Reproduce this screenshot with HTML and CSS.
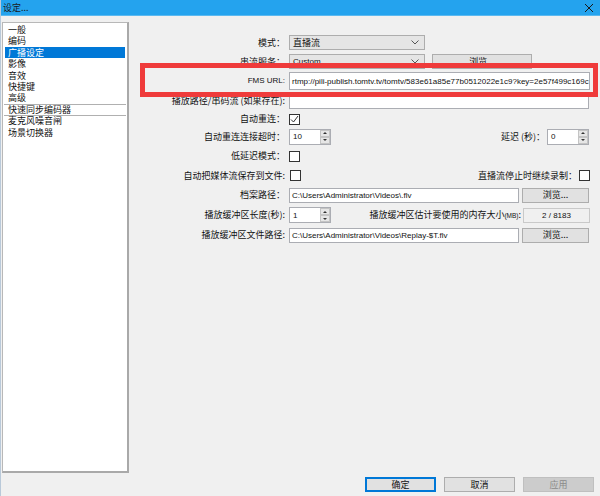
FILE: index.html
```html
<!DOCTYPE html>
<html lang="zh-CN">
<head>
<meta charset="utf-8">
<title>设定...</title>
<link rel="stylesheet" href="styles.css">
</head>
<body>
<div class="window">
  <div class="titlebar">
    <span class="title">设定...</span>
    <svg class="close" width="10" height="10" viewBox="0 0 10 10"><path d="M1 1 L9 9 M9 1 L1 9" stroke="#1a1a1a" stroke-width="1" fill="none"/></svg>
  </div>
  <div class="main">
    <ul class="sidebar">
      <li>一般</li>
      <li>编码</li>
      <li class="selected">广播设定</li>
      <li>影像</li>
      <li>音效</li>
      <li>快捷键</li>
      <li>高级</li>
      <li class="sep">快速同步编码器</li>
      <li class="sep">麦克风噪音闸</li>
      <li>场景切换器</li>
    </ul>
    <div class="panel">
      <div class="form">
        <div class="lbl">模式：</div>
        <div class="fld">
          <div class="combo w136"><span>直播流</span><svg width="8" height="5" viewBox="0 0 8 5"><path d="M0.5 0.5 L4 4 L7.5 0.5" stroke="#555" fill="none"/></svg></div>
        </div>

        <div class="lbl">串流服务：</div>
        <div class="fld">
          <div class="combo w136"><span class="latin">Custom</span><svg width="8" height="5" viewBox="0 0 8 5"><path d="M0.5 0.5 L4 4 L7.5 0.5" stroke="#555" fill="none"/></svg></div>
          <div class="btn w100 ml7">浏览...</div>
        </div>

        <div class="lbl latin">FMS URL:</div>
        <div class="fld">
          <div class="input url latin">rtmp://pili-publish.tomtv.tv/tomtv/583e61a85e77b0512022e1c9?key=2e57f499c169c</div>
        </div>

        <div class="lbl">播放路径/串码流 (如果存在):</div>
        <div class="fld">
          <div class="input path"></div>
        </div>

        <div class="lbl">自动重连：</div>
        <div class="fld">
          <div class="check"><svg width="9" height="9" viewBox="0 0 9 9"><path d="M1 4.5 L3.5 7 L8 1" stroke="#333" stroke-width="1" fill="none"/></svg></div>
        </div>

        <div class="lbl">自动重连连接超时：</div>
        <div class="fld">
          <div class="spin"><span class="latin">10</span><div class="arrows"><i class="up"></i><i class="down"></i></div></div>
          <div class="spacer"></div>
          <span class="inlbl">延迟 (秒)：</span>
          <div class="spin mr1"><span class="latin">0</span><div class="arrows"><i class="up"></i><i class="down"></i></div></div>
        </div>

        <div class="lbl">低延迟模式：</div>
        <div class="fld">
          <div class="check"></div>
        </div>

        <div class="lbl">自动把媒体流保存到文件:</div>
        <div class="fld">
          <div class="check ml1"></div>
          <div class="spacer"></div>
          <span class="inlbl">直播流停止时继续录制：</span>
          <div class="check"></div>
        </div>

        <div class="lbl">档案路径：</div>
        <div class="fld">
          <div class="input file latin">C:\Users\Administrator\Videos\.flv</div>
          <div class="btn w67 ml3">浏览...</div>
        </div>

        <div class="lbl">播放缓冲区长度(秒):</div>
        <div class="fld">
          <div class="spin"><span class="latin">1</span><div class="arrows"><i class="up"></i><i class="down"></i></div></div>
          <div class="spacer"></div>
          <span class="inlbl">播放缓冲区估计要使用的内存大小<span class="small">(MB)</span>:</span>
          <div class="readonly latin">2 / 8183</div>
        </div>

        <div class="lbl">播放缓冲区文件路径:</div>
        <div class="fld">
          <div class="input file latin">C:\Users\Administrator\Videos\Replay-$T.flv</div>
          <div class="btn w67 ml3">浏览...</div>
        </div>
      </div>
    </div>
  </div>
  <div class="footer">
    <div class="btn default">确定</div>
    <div class="btn">取消</div>
    <div class="btn disabled">应用</div>
  </div>
  <div class="highlight"></div>
</div>
</body>
</html>
```

FILE: styles.css
```css
* { box-sizing: border-box; }
html, body { margin: 0; padding: 0; }
body {
  width: 600px;
  height: 496px;
  overflow: hidden;
  background: #f0f0f0;
  font-family: "Noto Sans CJK SC", "Liberation Sans", sans-serif;
  font-size: 9px;
  color: #111;
}
.window {
  position: relative;
  width: 600px;
  height: 496px;
  border-left: 1px solid #b9c9d9;
  background: #f0f0f0;
}
.titlebar {
  height: 16px;
  background: #24a3ee;
  border-bottom: 1px solid #5bb9f0;
  display: flex;
  align-items: center;
  justify-content: space-between;
  padding: 0 6px 0 2px;
}
.title { font-size: 9px; color: #1a1a1a; line-height: 15px; }
.close { display: block; }

.main {
  height: 457px;
  padding-top: 6px;
  display: flex;
}
.sidebar {
  list-style: none;
  margin: 0 0 0 1px;
  padding: 1px;
  width: 127px;
  height: 451px;
  background: #fff;
  border: 1px solid #b8b8b8;
  border-right: 2px solid #a9a9a9;
  border-bottom: 2px solid #a9a9a9;
}
.sidebar li {
  height: 11.4px;
  line-height: 11.4px;
  padding-left: 4px;
  margin: 0 0 0 0;
  white-space: nowrap;
}
.sidebar li.selected { background: #0078d7; color: #fff; margin: 0 1px; padding-left: 3px; }
.sidebar li.sep { border-top: 1px solid #b0b0b0; line-height: 10.4px; }

.panel { flex: 1; padding-top: 11px; }
.form {
  display: grid;
  grid-template-columns: 156px 301px;
  column-gap: 4px;
  grid-template-rows: 19px 19px 20px 20px 16px 19px 20px 19px 20px 20px 20px;
  align-items: center;
}
.lbl { text-align: right; white-space: nowrap; line-height: 12px; }
.fld { display: flex; align-items: center; white-space: nowrap; }
.latin { font-family: "Liberation Sans", Arial, sans-serif; font-size: 8px; }
.spacer { flex: 1; }
.inlbl { line-height: 12px; margin-right: 2px; }
.small { font-size: 6.5px; font-family: "Liberation Sans", sans-serif; }

.combo {
  height: 15px;
  background: #e5e5e5;
  border: 1px solid #adadad;
  display: flex;
  align-items: center;
  justify-content: space-between;
  padding: 0 5px 0 3px;
  line-height: 12px;
}
.combo svg { display: block; }
.w136 { width: 136px; }
.w100 { width: 100px; }
.w67 { width: 67px; }
.ml7 { margin-left: 7px; }
.ml3 { margin-left: 3px; }
.ml1 { margin-left: 1px; }
.mr1 { margin-right: 1px; }

.btn {
  height: 15px;
  background: #e1e1e1;
  border: 1px solid #adadad;
  display: flex;
  align-items: center;
  justify-content: center;
  line-height: 12px;
}
.input {
  background: #fff;
  border: 1px solid #abadb3;
  padding: 0 2px;
  overflow: hidden;
  white-space: nowrap;
  display: flex;
  align-items: center;
}
.url { width: 301px; height: 18px; }
.path { width: 300px; height: 16px; }
.file { width: 230px; height: 15px; }
.readonly {
  width: 67px;
  height: 15px;
  border: 1px solid #c9c9c9;
  background: #f0f0f0;
  display: flex;
  align-items: center;
  justify-content: center;
}
.check {
  width: 11px;
  height: 11px;
  border: 1px solid #333;
  background: #fff;
  display: flex;
  align-items: center;
  justify-content: center;
}
.check svg { display: block; }
.spin {
  width: 42px;
  height: 16px;
  background: #fff;
  border: 1px solid #abadb3;
  display: flex;
  align-items: center;
  justify-content: space-between;
  padding-left: 3px;
}
.arrows {
  width: 10px;
  height: 14px;
  display: flex;
  flex-direction: column;
  gap: 0;
  margin-right: 0;
}
.arrows i {
  flex: 1;
  background: #e6e6e6;
  border: 1px solid #c4c4c4;
  position: relative;
}
.arrows i::after {
  content: "";
  position: absolute;
  left: 2px;
  top: 1.5px;
  border-left: 2px solid transparent;
  border-right: 2px solid transparent;
}
.arrows i.up::after { border-bottom: 2px solid #333; }
.arrows i.down::after { border-top: 2px solid #333; }

.footer {
  height: 23px;
  padding: 4px 6px 4px 0;
  display: flex;
  justify-content: flex-end;
  gap: 8px;
}
.footer .btn { width: 71px; }
.footer .btn.default { border: 2px solid #0078d7; }
.footer .btn.disabled { background: #cccccc; border-color: #bfbfbf; color: #8a8a8a; }

.highlight {
  position: absolute;
  left: 139px;
  top: 63px;
  width: 458px;
  height: 34px;
  border: 5px solid #ef3b3b;
  pointer-events: none;
}
```
